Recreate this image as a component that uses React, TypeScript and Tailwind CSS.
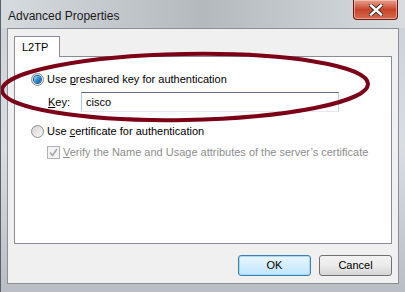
const font = { fontFamily: '"Liberation Sans", Arial, sans-serif' };

const Radio = ({ checked }: { checked?: boolean }) => (
  <span className="relative flex h-[13px] w-[13px] shrink-0 items-center justify-center rounded-full border border-[#8e8f8f] bg-gradient-to-br from-[#d4d4d4] to-[#f8f8f8]">
    {checked && (
      <span className="h-[7px] w-[7px] rounded-full bg-gradient-to-br from-[#a9e0f9] via-[#2c8fd6] to-[#0b4f8e] ring-1 ring-[#1b5b91]" />
    )}
  </span>
);

export default function App() {
  return (
    <div
      className="relative flex h-[292px] w-[405px] flex-col overflow-hidden border-l border-[#5c6167] bg-gradient-to-b from-[#c9d0d7] via-[#dadee3] to-[#b9bec4] text-[11px] text-black"
      style={font}
    >
      {/* title bar */}
      <div className="flex h-[28px] shrink-0 items-start justify-between bg-gradient-to-r from-[#d6dbe0] via-[#b4b9be] to-[#d8dce1]">
        <span className="pl-[7px] pt-[7px] text-[12px] text-[#1b1b1b]">Advanced Properties</span>
        <button className="mr-[7px] flex h-[20px] w-[45px] items-center justify-center rounded-b-[4px] border border-t-0 border-[#6b1c12] bg-gradient-to-b from-[#e8a08f] via-[#c8432a] to-[#d36a4e] shadow-[inset_0_0_0_1px_rgba(255,220,210,0.5)]">
          <svg width="14" height="12" viewBox="0 0 14 12">
            <path d="M2 1.5 L12 10.5 M12 1.5 L2 10.5" stroke="#2b2b2b" strokeWidth="4" strokeLinecap="square" />
            <path d="M2 1.5 L12 10.5 M12 1.5 L2 10.5" stroke="#ffffff" strokeWidth="2.4" strokeLinecap="square" />
          </svg>
        </button>
      </div>

      {/* client area */}
      <div className="mx-[6px] flex flex-1 flex-col border border-[#8a8f96] bg-[#f0f0f0] px-[6px] pt-[7px]">
        <div className="flex">
          <div className="relative -mb-px flex h-[21px] w-[46px] items-center border border-b-0 border-[#898c95] bg-white pl-[7px]">
            L2TP
          </div>
        </div>
        <div className="flex h-[188px] flex-col whitespace-nowrap border border-[#898c95] bg-white pl-[16px] pt-[15px]">
          <label className="flex h-[15px] items-center gap-[3px]">
            <Radio checked />
            <span>
              Use <u>p</u>reshared key for authentication
            </span>
          </label>
          <div className="mt-[5px] flex items-center pl-[17px]">
            <span className="w-[33px]">
              <u>K</u>ey:
            </span>
            <div className="flex h-[20px] w-[258px] items-center border border-[#abadb3] border-t-[#5c6d85] border-r-[#bfd2e4] border-b-[#e3e9ef] border-l-[#b5c5d8] pl-[4px]">
              cisco
            </div>
          </div>
          <label className="mt-[12px] flex h-[15px] items-center gap-[3px]">
            <Radio />
            <span>
              Use <u>c</u>ertificate for authentication
            </span>
          </label>
          <label className="mt-[5px] flex items-center gap-[3px] pl-[16px] text-[#8d8d8d]">
            <span className="flex h-[13px] w-[13px] items-center justify-center border border-[#b1b1b1] bg-[#f4f4f4]">
              <svg width="9" height="9" viewBox="0 0 9 9">
                <path d="M1 4.5 L3.5 7.5 L8 1" fill="none" stroke="#a8a8a8" strokeWidth="1.6" />
              </svg>
            </span>
            <span>
              <u>V</u>erify the Name and Usage attributes of the server’s certificate
            </span>
          </label>
        </div>
        <div className="flex justify-end gap-[8px] pt-[11px]">
          <button className="flex h-[21px] w-[73px] items-center justify-center rounded-[3px] border border-[#3c7fb1] bg-gradient-to-b from-[#eaf6fd] to-[#bee6fd] shadow-[inset_0_0_0_1px_#a7d9f5]">
            OK
          </button>
          <button className="flex h-[21px] w-[73px] items-center justify-center rounded-[3px] border border-[#707070] bg-gradient-to-b from-[#f2f2f2] via-[#ebebeb] to-[#d5d5d5]">
            Cancel
          </button>
        </div>
      </div>
      <div className="h-[8px] shrink-0" />

      {/* annotation */}
      <svg className="pointer-events-none absolute left-0 top-0" width="405" height="292">
        <ellipse
          cx="184"
          cy="87"
          rx="183"
          ry="33"
          transform="rotate(-1 184 87)"
          fill="none"
          stroke="#7c0016"
          strokeWidth="4"
        />
      </svg>
    </div>
  );
}
